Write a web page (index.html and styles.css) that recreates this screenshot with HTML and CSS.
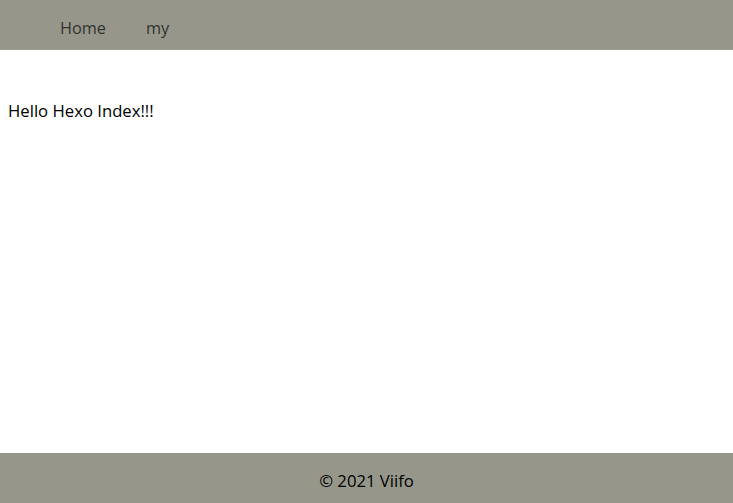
FILE: index.html
```html
<!DOCTYPE html>
<html>
<head>
<meta charset="utf-8">
<link rel="stylesheet" href="styles.css">
</head>
<body>
<div class="page">
  <header class="header">
    <ul class="nav">
      <li class="nav-item"><a class="nav-link" href="#">Home</a></li>
      <li class="nav-item"><a class="nav-link" href="#">my</a></li>
    </ul>
  </header>
  <main class="main">
    <p class="hello">Hello Hexo Index!!!</p>
  </main>
  <footer class="footer">© 2021 Viifo</footer>
</div>
</body>
</html>
```
FILE: styles.css
```css
html, body {
  margin: 0;
  padding: 0;
  height: 100%;
}
body {
  font-family: "Open Sans", "Noto Sans", sans-serif;
  font-size: 16.7px;
  color: #000;
  background: #fff;
}
.page {
  display: flex;
  flex-direction: column;
  min-height: 100vh;
}
.header {
  height: 50px;
  background: #96978a;
  display: flex;
  align-items: center;
}
.nav {
  list-style: none;
  margin: 0;
  padding: 4px 0 0 40px;
  display: flex;
}
.nav-item {
  padding: 0 20px;
}
.nav-link {
  color: #333;
  text-decoration: none;
  font-size: 16.3px;
  line-height: 22px;
}
.main {
  flex: 1;
  padding: 0 8px;
}
.hello {
  margin: 50px 0 0;
  line-height: 22px;
}
.footer {
  height: 50px;
  background: #96978a;
  display: flex;
  align-items: center;
  justify-content: center;
  padding-top: 4px;
  box-sizing: border-box;
}
```
